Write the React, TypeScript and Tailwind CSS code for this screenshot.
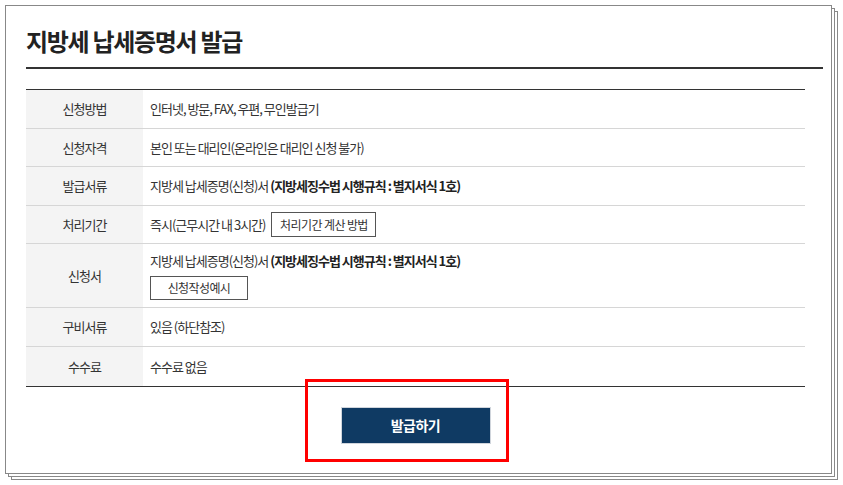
const rows = [
  { label: "신청방법", h: "h-[39px]", value: <span>인터넷, 방문, FAX, 우편, 무인발급기</span> },
  { label: "신청자격", h: "h-[38px]", value: <span>본인 또는 대리인(온라인은 대리인 신청 불가)</span> },
  {
    label: "발급서류",
    h: "h-[39px]",
    value: (
      <span>
        지방세 납세증명(신청)서 <b className="font-bold text-[#222]">(지방세징수법 시행규칙 : 별지서식 1호)</b>
      </span>
    ),
  },
  {
    label: "처리기간",
    h: "h-[38px]",
    value: (
      <div className="flex items-center gap-[6px]">
        <span>즉시(근무시간 내 3시간)</span>
        <button className="h-[25px] w-[105px] border border-[#555] bg-white text-[12px] text-[#333] tracking-[-0.6px]">
          처리기간 계산 방법
        </button>
      </div>
    ),
  },
  {
    label: "신청서",
    h: "h-[64px]",
    value: (
      <div className="flex flex-col items-start gap-[6px]">
        <span>
          지방세 납세증명(신청)서 <b className="font-bold text-[#222]">(지방세징수법 시행규칙 : 별지서식 1호)</b>
        </span>
        <button className="h-[24px] w-[98px] border border-[#555] bg-white text-[12px] text-[#333] tracking-[-0.6px]">
          신청작성예시
        </button>
      </div>
    ),
  },
  { label: "구비서류", h: "h-[39px]", value: <span>있음 (하단참조)</span> },
  { label: "수수료", h: "h-[40px]", value: <span>수수료 없음</span> },
];

export default function App() {
  return (
    <div
      className="min-h-[485px] w-[843px] bg-white p-[5px]"
      style={{ fontFamily: '"Noto Sans CJK KR", "Noto Sans", sans-serif' }}
    >
      <div className="relative h-[469px] w-[827px] border border-[#888] bg-white pl-[20px] shadow-[3px_3px_0_-1px_#fff,3px_3px_0_0_#888,6px_6px_0_-1px_#fff,6px_6px_0_0_#888]">
        <h1 className="w-[797px] border-b-2 border-[#333] pt-[19px] pb-[10px] text-[24px] leading-[32px] font-bold tracking-[-1.3px] text-[#222]">
          지방세 납세증명서 발급
        </h1>

        <div className="mt-[20px] w-[779px] border-t border-[#333] text-[13px] tracking-[-1px] text-[#333]">
          {rows.map((row, i) => (
            <div
              key={row.label}
              className={`flex ${row.h} ${i === rows.length - 1 ? "border-b border-[#333]" : "border-b border-[#d6d6d6]"}`}
            >
              <div className="flex w-[117px] shrink-0 items-center justify-center bg-[#f4f4f4]">{row.label}</div>
              <div className="flex flex-1 items-center pl-[7px]">{row.value}</div>
            </div>
          ))}
        </div>

        <div className="flex w-[779px] justify-center pt-[20px]">
          <button className="h-[37px] w-[150px] border border-[#d0d5dc] bg-[#0f3a63] text-[14px] font-bold tracking-[-0.5px] text-white">
            발급하기
          </button>
        </div>

        <div className="absolute left-[299px] top-[373px] h-[83px] w-[204px] border-[3px] border-[#ff0000]" />
      </div>
    </div>
  );
}
